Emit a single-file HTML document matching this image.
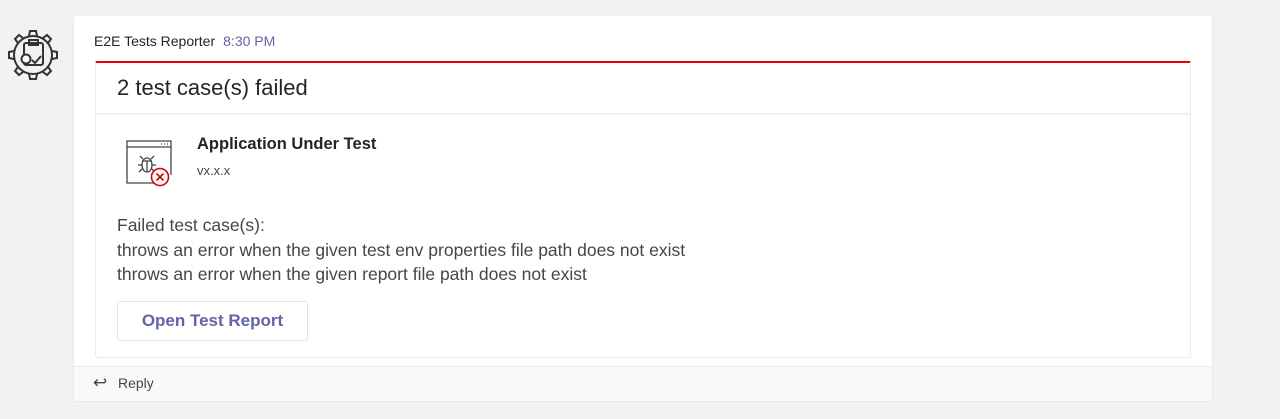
<!DOCTYPE html>
<html><head><style>
body{margin:0;width:1280px;height:419px;background:#f3f2f1;font-family:"Liberation Sans",sans-serif;position:relative;overflow:hidden}
.card{position:absolute;left:74px;top:16px;width:1138px;height:384px;background:#fff;border-radius:3px;box-shadow:0 1px 2px rgba(0,0,0,.1)}
.hdr{position:absolute;left:20px;top:17px;font-size:14px;color:#252423}
.hdr span{color:#6264a7;margin-left:8px}
.inner{position:absolute;left:21px;top:45px;width:1094px;height:294px;border:1px solid #edebe9;border-top:2px solid #e00;border-radius:2px}
.title{height:50px;border-bottom:2px solid #f0f0f0;font-size:22px;color:#252423;padding-left:21px;line-height:50px}
.foot{position:absolute;left:0;top:350px;width:1138px;height:34px;background:#faf9f8;border-top:1px solid #edebe9;font-size:14px;color:#484644}
.t{position:absolute;color:#484644;font-size:16px}
.btn{position:absolute;left:21px;top:238px;width:189px;height:38px;border:1px solid #e1dff6;border-radius:3px;color:#6264a7;font-size:17px;font-weight:bold;text-align:center;line-height:38px}
</style></head><body>
<svg style="position:absolute;left:5px;top:27px" width="56" height="56" viewBox="0 0 56 56" fill="none" stroke="#333" stroke-width="2">
<circle cx="28" cy="28" r="19"/>
<g stroke-linecap="round">
<path d="M24 9l1-5h6l1 5M24 47l1 5h6l1-5M9 24l-5 1v6l5 1M47 24l5 1v6l-5 1"/>
<path d="M13 16l-3-4 4-4 4 3M43 16l3-4-4-4-4 3M13 40l-3 4 4 4 4-3M43 40l3 4-4 4-4-3"/>
</g>
<rect x="19" y="16" width="19" height="22" rx="2"/><rect x="24" y="13" width="9" height="5"/>
<circle cx="21" cy="32" r="4.5" fill="#fff"/><path d="M27 33l3 3 6-7"/></svg>
<div class="card">
<div class="hdr">E2E Tests Reporter<span>8:30 PM</span></div>
<div class="inner">
<div class="title">2 test case(s) failed</div>
<svg style="position:absolute;left:29px;top:76px" width="48" height="50" viewBox="0 0 48 50" fill="none" stroke="#444" stroke-width="1.3">
<path d="M30 44H2V2h44v34"/><path d="M2 8h44"/><path d="M36 5h1M39 5h1M42 5h1"/>
<ellipse cx="22" cy="26" rx="5" ry="7"/><path d="M17 22h10M22 22v11M17 26h-4M27 26h4M17 30l-3 3M27 30l3 3M18 20l-3-3M26 20l3-3"/>
<circle cx="35" cy="38" r="8.5" stroke="#d00" stroke-width="1.6" fill="#fff"/><path d="M31.5 34.5l7 7M38.5 34.5l-7 7" stroke="#d00" stroke-width="1.6"/></svg>
<div class="t" style="left:101px;top:72px;font-size:16.5px;color:#252423;font-weight:bold">Application Under Test</div>
<div class="t" style="left:101px;top:100px;font-size:13px">vx.x.x</div>
<div class="t" style="left:21px;top:150px;line-height:24.5px;font-size:17.5px">Failed test case(s):<br>throws an error when the given test env properties file path does not exist<br>throws an error when the given report file path does not exist</div>
<div class="btn">Open Test Report</div>
</div>
<div class="foot"><span style="position:absolute;left:19px;top:6px;font-size:17px">↩</span><span style="position:absolute;left:44px;top:8px">Reply</span></div>
</div>
</body></html>
